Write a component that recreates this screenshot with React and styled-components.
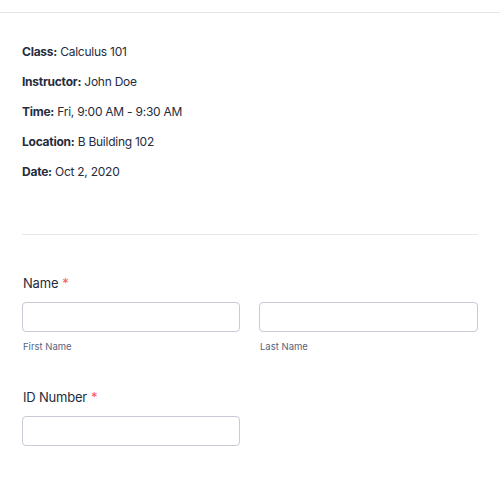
import React from "react";
import styled, { createGlobalStyle } from "styled-components";

const Global = createGlobalStyle`
    body {
        margin: 0;
        background: #ffffff;
        font-family: Inter, "Noto Sans", sans-serif;
        color: #2c3345;
    }
`;

const Page = styled.div`
    width: 500px;
`;

const TopRule = styled.div`
    height: 12px;
    border-bottom: 1px solid #e3e5ea;
`;

const Body = styled.div`
    padding: 29px 22px 0 22px;
`;

const Info = styled.div`
    display: flex;
    flex-direction: column;
    gap: 10px;
`;

const InfoLine = styled.p`
    margin: 0;
    font-size: 12px;
    letter-spacing: -0.25px;
    line-height: 20px;
    color: #252c3d;

    b {
        font-weight: 700;
    }
`;

const Divider = styled.hr`
    margin: 52px 0 0 0;
    border: none;
    border-top: 1px solid #e6e8ee;
`;

const Field = styled.div`
    margin-top: ${(p) => p.$top}px;
    padding-left: 1px;
`;

const Label = styled.div`
    font-size: 13px;
    letter-spacing: -0.2px;
    line-height: 20px;
    color: #252c3d;
    margin-bottom: 9px;
`;

const Req = styled.span`
    color: #f5565b;
    margin-left: 4px;
`;

const Row = styled.div`
    display: grid;
    grid-template-columns: ${(p) => (p.$single ? "218px" : "218px 219px")};
    column-gap: 19px;
    margin-left: -1px;
`;

const Col = styled.div`
    display: flex;
    flex-direction: column;
`;

const Input = styled.input`
    box-sizing: border-box;
    width: 100%;
    height: 30px;
    border: 1px solid #c8cbd6;
    border-radius: 4px;
    background: #fff;
    outline: none;
`;

const Sub = styled.div`
    margin-top: 8px;
    font-size: 9.5px;
    line-height: 14px;
    color: #57647e;
    padding-left: 1px;
`;

const rows = [
    ["Class:", "Calculus 101"],
    ["Instructor:", "John Doe"],
    ["Time:", "Fri, 9:00 AM - 9:30 AM"],
    ["Location:", "B Building 102"],
    ["Date:", "Oct 2, 2020"],
];

export default function App() {
    return (
        <Page>
            <Global />
            <TopRule />
            <Body>
                <Info>
                    {rows.map(([k, v]) => (
                        <InfoLine key={k}>
                            <b>{k}</b> {v}
                        </InfoLine>
                    ))}
                </Info>
                <Divider />
                <Field $top={38}>
                    <Label>
                        Name<Req>*</Req>
                    </Label>
                    <Row>
                        <Col>
                            <Input />
                            <Sub>First Name</Sub>
                        </Col>
                        <Col>
                            <Input />
                            <Sub>Last Name</Sub>
                        </Col>
                    </Row>
                </Field>
                <Field $top={33}>
                    <Label>
                        ID Number<Req>*</Req>
                    </Label>
                    <Row $single>
                        <Col>
                            <Input />
                        </Col>
                    </Row>
                </Field>
            </Body>
        </Page>
    );
}
